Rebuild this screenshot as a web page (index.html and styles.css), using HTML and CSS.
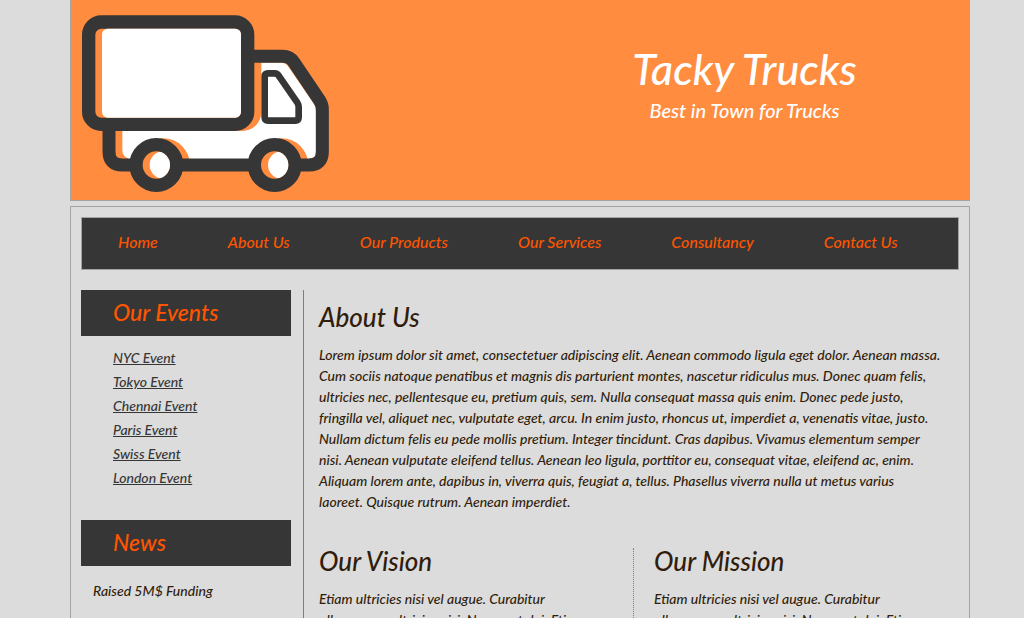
FILE: index.html
```html
<!DOCTYPE html>
<html lang="en">
<head>
<meta charset="utf-8">
<title>Tacky Trucks</title>
<link rel="stylesheet" href="styles.css">
</head>
<body>
<header class="banner">
  <svg class="logo" viewBox="33 0 780 600" role="img" aria-label="Delivery truck">
    <defs>
      <clipPath id="hub-rear"><circle cx="289" cy="495" r="41"/></clipPath>
      <clipPath id="hub-front"><circle cx="644" cy="495" r="41"/></clipPath>
      <clipPath id="cab-inside"><path d="M150 170H672Q682 170 688 180L780 308Q787 318 787 330V458Q787 495 750 495H187Q147 495 147 455Z"/></clipPath>
    </defs>
    <path fill="#fff" d="M187 300H600V188H664Q676 188 682 196L762 312Q768 322 768 334V455Q768 475 748 475V495H205V475Q187 470 187 450Z"/>
    <g clip-path="url(#cab-inside)" fill="#ff8c3f">
      <rect x="87" y="46" width="517" height="347" rx="57"/>
      <circle cx="310" cy="495" r="80"/>
      <circle cx="665" cy="495" r="80"/>
    </g>
    <path fill="none" stroke="#363636" stroke-width="39" d="M560 169H668Q690 169 702 187L778 300Q787 313 787 328V455Q787 495 747 495H187Q147 495 147 455V370"/>
    <rect x="86" y="66" width="477" height="307" rx="38" fill="#ff8c3f" stroke="#363636" stroke-width="40"/>
    <rect x="126" y="86" width="417" height="267" rx="17" fill="#fff"/>
    <path fill="#fff" stroke="#363636" stroke-width="20" stroke-linejoin="round" d="M614 230Q614 220 624 220H644Q652 220 656 227L712 308Q716 314 716 322V352Q716 362 706 362H624Q614 362 614 352Z"/>
    <circle cx="289" cy="495" r="61" fill="#ff8c3f" stroke="#363636" stroke-width="40"/>
    <circle cx="310" cy="495" r="41" fill="#fff" clip-path="url(#hub-rear)"/>
    <circle cx="644" cy="495" r="61" fill="#ff8c3f" stroke="#363636" stroke-width="40"/>
    <circle cx="665" cy="495" r="41" fill="#fff" clip-path="url(#hub-front)"/>
  </svg>
  <div class="brand">
    <h1 class="brand-name">Tacky Trucks</h1>
    <p class="brand-tagline">Best in Town for Trucks</p>
  </div>
</header>
<div class="page">
  <nav class="menu">
    <a href="#">Home</a>
    <a href="#">About Us</a>
    <a href="#">Our Products</a>
    <a href="#">Our Services</a>
    <a href="#">Consultancy</a>
    <a href="#">Contact Us</a>
  </nav>
  <div class="columns">
    <aside class="sidebar">
      <h2 class="side-title">Our Events</h2>
      <ul class="events">
        <li><a href="#">NYC Event</a></li>
        <li><a href="#">Tokyo Event</a></li>
        <li><a href="#">Chennai Event</a></li>
        <li><a href="#">Paris Event</a></li>
        <li><a href="#">Swiss Event</a></li>
        <li><a href="#">London Event</a></li>
      </ul>
      <h2 class="side-title">News</h2>
      <p class="news">Raised 5M$ Funding</p>
    </aside>
    <main class="content">
      <section class="intro">
        <h2 class="title">About Us</h2>
        <p>Lorem ipsum dolor sit amet, consectetuer adipiscing elit. Aenean commodo ligula eget dolor. Aenean massa. Cum sociis natoque penatibus et magnis dis parturient montes, nascetur ridiculus mus. Donec quam felis, ultricies nec, pellentesque eu, pretium quis, sem. Nulla consequat massa quis enim. Donec pede justo, fringilla vel, aliquet nec, vulputate eget, arcu. In enim justo, rhoncus ut, imperdiet a, venenatis vitae, justo. Nullam dictum felis eu pede mollis pretium. Integer tincidunt. Cras dapibus. Vivamus elementum semper nisi. Aenean vulputate eleifend tellus. Aenean leo ligula, porttitor eu, consequat vitae, eleifend ac, enim. Aliquam lorem ante, dapibus in, viverra quis, feugiat a, tellus. Phasellus viverra nulla ut metus varius<br>laoreet. Quisque rutrum. Aenean imperdiet.</p>
      </section>
      <div class="pair">
        <section class="half">
          <h2 class="title">Our Vision</h2>
          <p>Etiam ultricies nisi vel augue. Curabitur ullamcorper ultricies nisi. Nam eget dui. Etiam</p>
        </section>
        <section class="half">
          <h2 class="title">Our Mission</h2>
          <p>Etiam ultricies nisi vel augue. Curabitur ullamcorper ultricies nisi. Nam eget dui. Etiam</p>
        </section>
      </div>
    </main>
  </div>
</div>
</body>
</html>
```

FILE: styles.css
```css
* { box-sizing: border-box; }
html { overflow: hidden; }
body {
  margin: 0;
  padding: 0 54px 0 70px;
  background: #dcdcdc;
  color: #311d0b;
  font: italic 500 14px/21px Lato, "Liberation Sans", sans-serif;
}
h1, h2, p, ul { margin: 0; padding: 0; font-weight: 500; }
.banner {
  display: grid;
  grid-template-columns: 1fr 1fr;
  border: 1px solid #a3a3a3;
  border-top: 0;
  background: #ff8c3f;
  color: #fff;
}
.logo { display: block; width: 260px; height: 200px; }
.brand { padding-top: 43px; text-align: center; }
.brand-name { font-size: 43px; line-height: 52px; }
.brand-tagline { font-size: 20px; line-height: 30px; }
.page { margin-top: 5px; padding: 10px; border: 1px solid #a3a3a3; }
.menu {
  display: flex;
  gap: 70px;
  padding: 13px 36px 16px;
  border: 1px solid #a3a3a3;
  background: #363636;
  font-size: 16px;
  line-height: 22px;
  white-space: nowrap;
}
.menu a { color: #ff5500; text-decoration: none; }
.columns {
  display: grid;
  grid-template-columns: 210px 1fr;
  column-gap: 12px;
  padding-top: 20px;
}
.side-title {
  padding: 6px 32px 8px;
  background: #363636;
  color: #ff5500;
  font-size: 23px;
  line-height: 32px;
}
.events { padding: 10px 32px 30px; list-style: none; line-height: 24px; }
.events a { color: #363636; }
.news { padding: 14px 12px; }
.content { padding: 14px 12px 0 15px; border-left: 1px solid #ff5500; }
.title { padding-bottom: 14px; font-size: 26px; line-height: 26px; }
.intro { padding-right: 4px; }
.pair { display: grid; grid-template-columns: 1fr 1fr; padding-top: 36px; }
.half { padding-right: 20px; }
.half + .half { padding-left: 20px; border-left: 1px dotted #ff5500; }
```
